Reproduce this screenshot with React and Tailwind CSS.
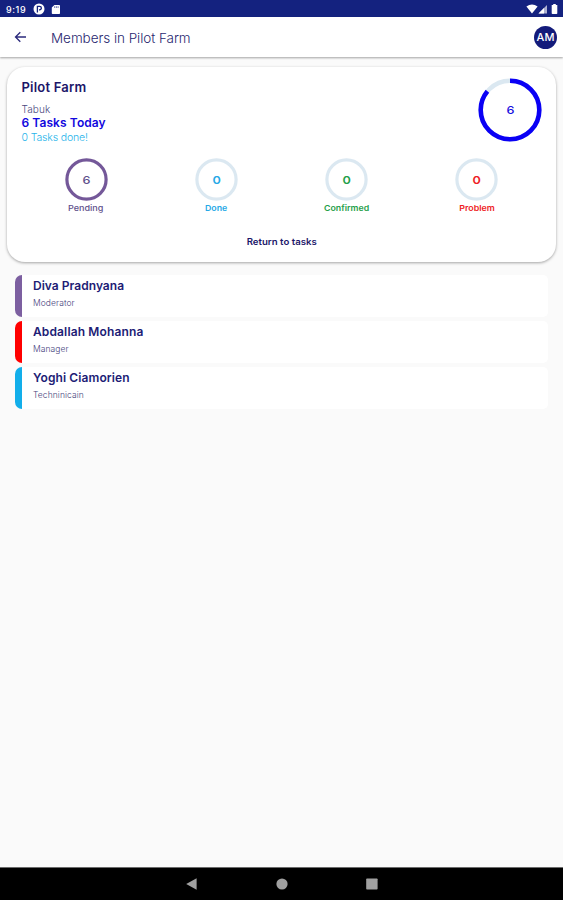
const STATS = [
  {
    label: "Pending",
    count: 6,
    ring: "#745899",
    text: "text-[#61518c]",
    weight: "font-medium scale-x-[1.13]",
  },
  {
    label: "Done",
    count: 0,
    ring: "#dbe8f1",
    text: "text-[#26a9e6]",
    weight: "font-semibold scale-x-[1.1]",
  },
  {
    label: "Confirmed",
    count: 0,
    ring: "#dbe8f1",
    text: "text-[#1fa04a]",
    weight: "font-semibold scale-x-[1.1]",
  },
  {
    label: "Problem",
    count: 0,
    ring: "#dbe8f1",
    text: "text-[#ee1c25]",
    weight: "font-semibold scale-x-[1.11]",
  },
];

const MEMBERS = [
  {
    name: "Diva Pradnyana",
    role: "Moderator",
    bar: "bg-[#7c5fa0]",
    tracking: "tracking-[0.03px]",
  },
  {
    name: "Abdallah Mohanna",
    role: "Manager",
    bar: "bg-[#ff0000]",
    tracking: "tracking-[0.13px]",
  },
  {
    name: "Yoghi Ciamorien",
    role: "Techninicain",
    bar: "bg-[#12aeea]",
    tracking: "tracking-[0.1px]",
  },
];

function StatusBar() {
  return (
    <div className="flex h-[17px] shrink-0 items-center bg-[#14227f] pl-[6px] pr-[5px] pt-px text-white">
      <span className="w-[27px] text-[9px] font-medium leading-none tracking-[0.6px]">
        9:19
      </span>
      <svg width="12" height="12" viewBox="0 0 12 12">
        <circle cx="6" cy="6" r="5.5" fill="currentColor" />
        <path
          d="M4.4 9.4V3.3H6.6A1.75 1.75 0 0 1 6.6 6.8H6"
          fill="none"
          stroke="#14227f"
          strokeWidth="1.3"
        />
      </svg>
      <svg width="10" height="11" viewBox="0 0 10 11" className="ml-[6px]">
        <path
          d="M3.4 1H8.2Q9 1 9 1.8V9.2Q9 10 8.2 10H1.6Q.8 10 .8 9.2V3.6Z"
          fill="currentColor"
        />
        <path d="M3.7 2.2V4M5.4 2.2V4M7.1 2.2V4" stroke="#14227f" strokeWidth=".6" />
      </svg>
      <div className="ml-auto flex items-center">
        <svg width="12" height="10" viewBox="0 0 12 10">
          <path d="M.4 2.6Q6-1.4 11.6 2.6L6 9.6Z" fill="currentColor" />
        </svg>
        <svg width="10" height="10" viewBox="0 0 10 10">
          <path d="M.5 9.5L9 1V9.5Z" fill="currentColor" fillOpacity=".65" />
          <path d="M.5 9.5L6 4V9.5Z" fill="currentColor" />
        </svg>
        <svg width="7" height="10" viewBox="0 0 7 10" className="ml-[3px]">
          <path
            d="M2.2 0H4.8V1H6.3V9.2Q6.3 10 5.5 10H1.5Q.7 10 .7 9.2V1H2.2Z"
            fill="currentColor"
          />
        </svg>
      </div>
    </div>
  );
}

function AppBar() {
  return (
    <header className="z-10 flex h-10 shrink-0 items-center bg-white pl-[14px] pr-[6px] shadow-[0_1px_2px_rgba(0,0,0,0.35)]">
      <svg
        width="13"
        height="12"
        viewBox="0 0 13 12"
        fill="none"
        stroke="#2b2a7c"
        strokeWidth="1.3"
      >
        <path d="M12 6H1.6M6.3 1.2L1.5 6L6.3 10.8" />
      </svg>
      <h1 className="ml-6 whitespace-nowrap pt-[3px] text-[13.5px] font-light leading-none tracking-[-0.05px] text-[#29276f]">
        Members in Pilot Farm
      </h1>
      <div className="ml-auto flex size-[23px] items-center justify-center rounded-full bg-[#131b7b] pt-px text-[11px] font-medium leading-none text-white">
        AM
      </div>
    </header>
  );
}

function StatRing({ stat }) {
  return (
    <div className={`flex flex-col items-center ${stat.text}`}>
      <div className="grid size-[43px] place-items-center">
        <svg width="43" height="43" className="col-start-1 row-start-1">
          <circle
            cx="21.5"
            cy="21.5"
            r="19.6"
            fill="none"
            stroke={stat.ring}
            strokeWidth="3.2"
          />
        </svg>
        <span
          className={`col-start-1 row-start-1 scale-x-[1.15] pt-[2px] text-[11px] leading-none ${stat.count ? "font-medium" : "font-semibold"}`}
        >
          {stat.count}
        </span>
      </div>
      <span className={`mt-[2px] text-[8px] leading-[10px] ${stat.weight}`}>
        {stat.label}
      </span>
    </div>
  );
}

function TotalRing({ count }) {
  return (
    <div className="mt-[11px] grid size-16 place-items-center">
      <svg width="64" height="64" className="col-start-1 row-start-1 -rotate-90">
        <circle cx="32" cy="32" r="29.3" fill="none" stroke="#dbe8f1" strokeWidth="4.4" />
        <circle
          cx="32"
          cy="32"
          r="29.3"
          fill="none"
          stroke="#0a00f5"
          strokeWidth="4.6"
          pathLength="100"
          strokeDasharray="86 100"
        />
      </svg>
      <span className="col-start-1 row-start-1 scale-x-[1.15] pt-px text-[11px] font-medium leading-none text-[#1a10e0]">
        {count}
      </span>
    </div>
  );
}

function FarmCard() {
  return (
    <section className="mx-[7px] mt-[10px] h-[195px] rounded-[18px] bg-white px-[14px] shadow-[0_1px_3px_rgba(0,0,0,0.35)]">
      <div className="flex h-[91px] justify-between">
        <div className="whitespace-nowrap pl-[0.5px] pt-[12px]">
          <h2 className="text-[13px] font-semibold leading-4 tracking-[0.2px] text-[#1b1669]">
            Pilot Farm
          </h2>
          <p className="mt-[7px] text-[10px] font-light leading-[14px] tracking-[0.1px] text-[#4a4780]">
            Tabuk
          </p>
          <p className="text-[12px] font-semibold leading-[14px] tracking-[0.08px] text-[#1208de]">
            6 Tasks Today
          </p>
          <p className="text-[10.5px] font-light leading-[15px] tracking-[-0.15px] text-[#27b4ea]">
            0 Tasks done!
          </p>
        </div>
        <TotalRing count={6} />
      </div>
      <div className="grid grid-cols-4">
        {STATS.map((stat) => (
          <StatRing key={stat.label} stat={stat} />
        ))}
      </div>
      <button className="mx-auto mt-[23px] block scale-x-[1.07] text-[9px] font-semibold leading-3 text-[#1b1669]">
        Return to tasks
      </button>
    </section>
  );
}

function MemberRow({ member }) {
  return (
    <li className="flex h-[42px] overflow-hidden rounded-l-[7px] rounded-r-[5px] bg-white">
      <div className={`w-[7px] ${member.bar}`} />
      <div className="whitespace-nowrap pl-[11px] pt-[4px]">
        <p className={`text-[12px] font-semibold leading-[14px] text-[#211c75] ${member.tracking}`}>
          {member.name}
        </p>
        <p className="mt-[4px] text-[8.5px] font-light leading-3 tracking-[0.08px] text-[#45427c]">
          {member.role}
        </p>
      </div>
    </li>
  );
}

function NavBar() {
  return (
    <nav className="flex h-[33px] shrink-0 items-center justify-center gap-[78px] border-t border-[#6b6b6b] bg-black text-[#a0a0a0]">
      <svg width="12" height="12" viewBox="0 0 12 12">
        <path d="M.2 6L10.6 .2V11.8Z" fill="currentColor" />
      </svg>
      <svg width="12" height="12" viewBox="0 0 12 12">
        <circle cx="6" cy="6" r="5.6" fill="currentColor" />
      </svg>
      <svg width="12" height="12" viewBox="0 0 12 12">
        <rect x=".2" y=".4" width="11.4" height="11.2" rx=".8" fill="currentColor" />
      </svg>
    </nav>
  );
}

function App() {
  return (
    <div className="flex h-[900px] w-[563px] flex-col overflow-hidden bg-[#fafafa] font-['Inter',sans-serif]">
      <StatusBar />
      <AppBar />
      <main className="flex-1">
        <FarmCard />
        <ul className="ml-[15px] mr-[15px] mt-[13px] space-y-1">
          {MEMBERS.map((member) => (
            <MemberRow key={member.name} member={member} />
          ))}
        </ul>
      </main>
      <NavBar />
    </div>
  );
}

export default App;
